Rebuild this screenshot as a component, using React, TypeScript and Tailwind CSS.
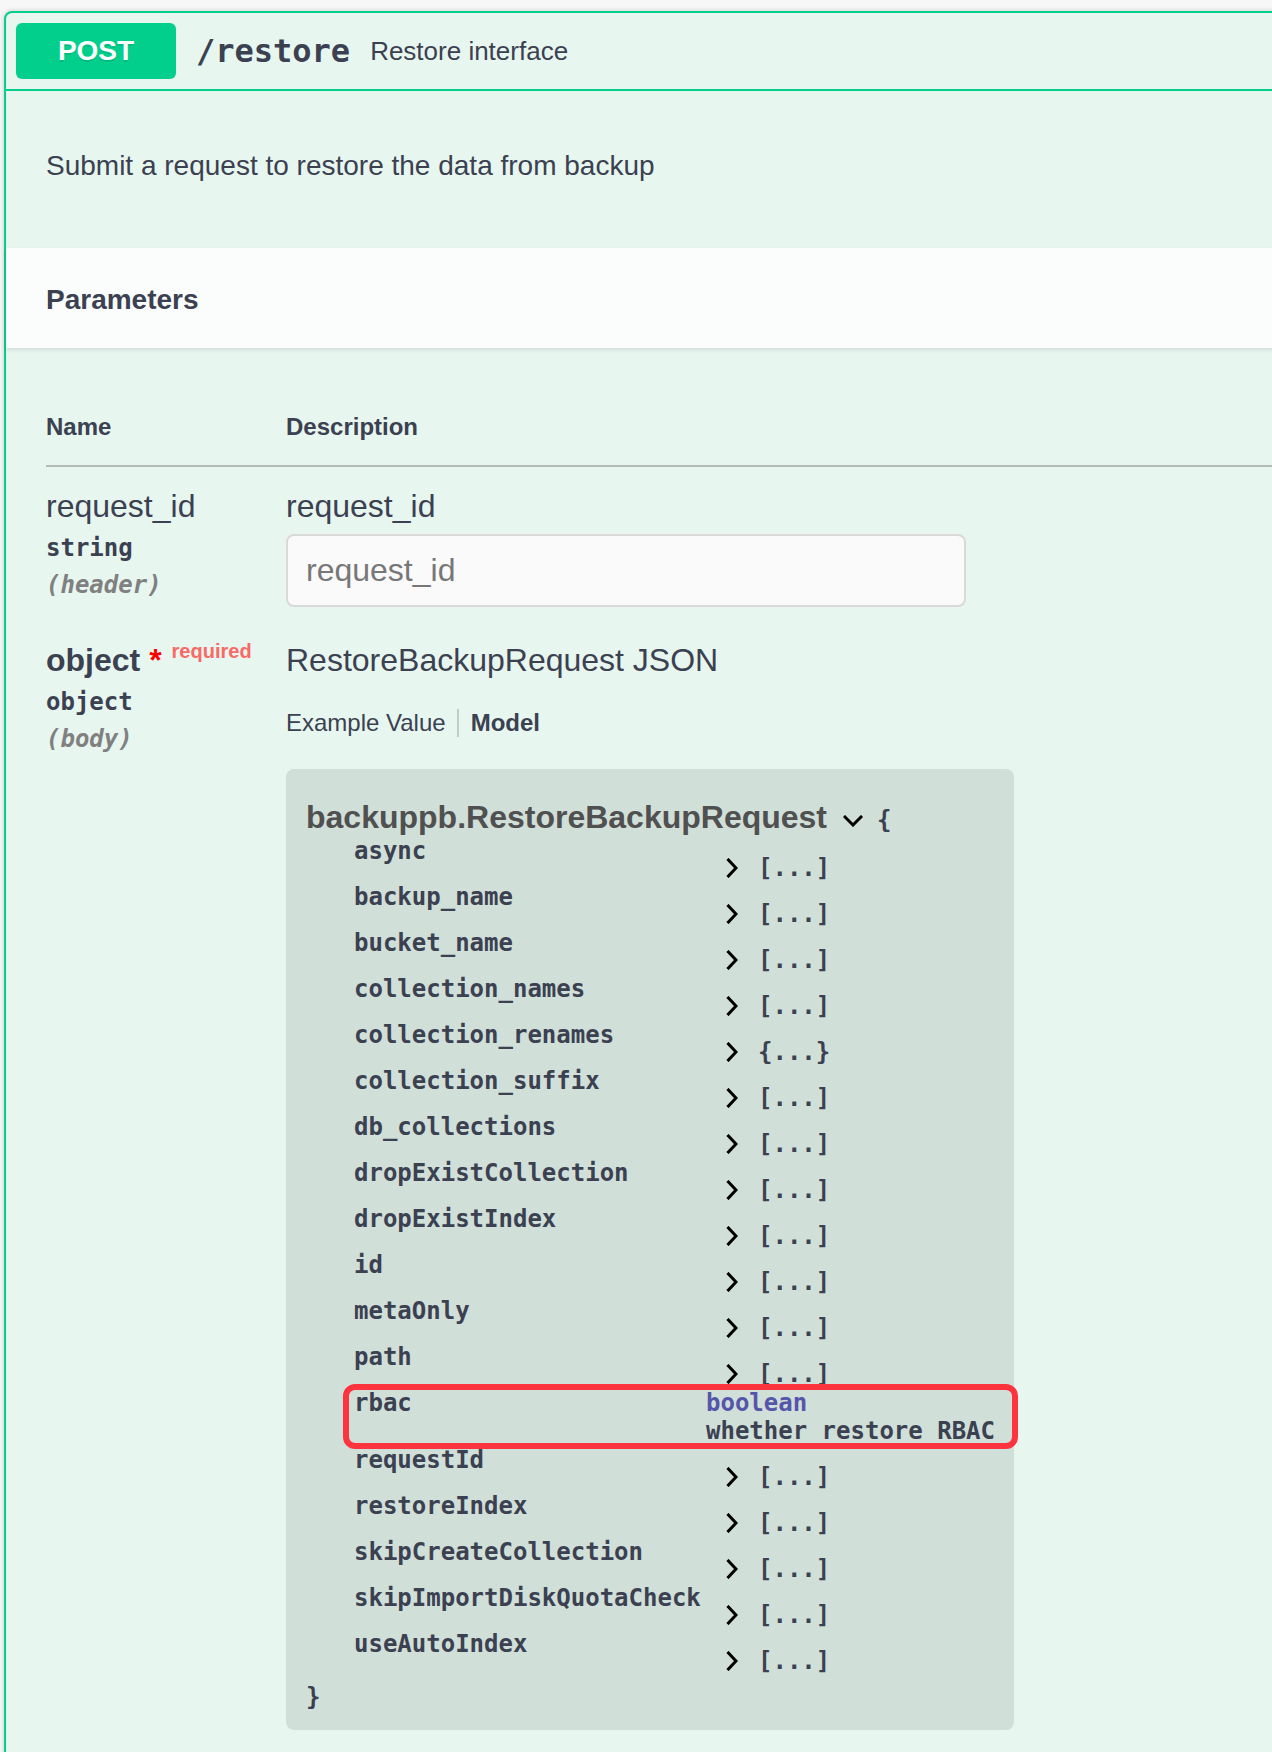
import React from "react";

const props: [string, string | null][] = [
  ["async", "[...]"],
  ["backup_name", "[...]"],
  ["bucket_name", "[...]"],
  ["collection_names", "[...]"],
  ["collection_renames", "{...}"],
  ["collection_suffix", "[...]"],
  ["db_collections", "[...]"],
  ["dropExistCollection", "[...]"],
  ["dropExistIndex", "[...]"],
  ["id", "[...]"],
  ["metaOnly", "[...]"],
  ["path", "[...]"],
  ["rbac", null],
  ["requestId", "[...]"],
  ["restoreIndex", "[...]"],
  ["skipCreateCollection", "[...]"],
  ["skipImportDiskQuotaCheck", "[...]"],
  ["useAutoIndex", "[...]"],
];

function ChevronRight() {
  return (
    <svg width="12" height="20" viewBox="0 0 12 20" className="ml-[20px] shrink-0">
      <path d="M2.5 2 L10 10 L2.5 18" fill="none" stroke="#000" strokeWidth="3" strokeLinecap="square" />
    </svg>
  );
}

function ChevronDown() {
  return (
    <svg width="20" height="12" viewBox="0 0 20 12" className="ml-[16px] relative top-[4px] shrink-0">
      <path d="M2 2 L10 10 L18 2" fill="none" stroke="#000" strokeWidth="3" strokeLinecap="square" />
    </svg>
  );
}

export default function App() {
  return (
    <div className="w-[1272px] h-[1752px] overflow-hidden bg-[#f7f7f7] font-['Liberation_Sans','Arial',sans-serif] text-[#3b4151]">
      <div className="ml-[4px] mt-[11px] w-[1330px] min-h-[1900px] rounded-[8px] border-2 border-[#03cf8d] bg-[#e8f6f0] shadow-[0_0_5px_rgba(0,0,0,0.19)]">
        {/* summary */}
        <div className="flex items-center p-[10px] border-b-2 border-[#03cf8d]">
          <div className="w-[160px] h-[56px] rounded-[6px] bg-[#03cf8d] text-white text-[28px] font-bold flex items-center justify-center [text-shadow:0_2px_0_rgba(0,0,0,0.1)]">
            POST
          </div>
          <span className="px-[20px] font-['DejaVu_Sans_Mono',monospace] text-[32px] font-bold leading-[40px]">/restore</span>
          <span className="text-[26px] leading-[32px]">Restore interface</span>
        </div>

        {/* description */}
        <div className="h-[157px] pl-[40px] pt-[59px]">
          <p className="text-[28px] leading-[32px]">Submit a request to restore the data from backup</p>
        </div>

        {/* parameters header */}
        <div className="h-[100px] bg-[#fafdfc] shadow-[0_2px_4px_rgba(0,0,0,0.1)] flex items-center pl-[40px] pt-[4px]">
          <h4 className="text-[28px] font-bold">Parameters</h4>
        </div>

        {/* table */}
        <div className="pl-[40px]">
          <div className="h-[119px] flex items-end pb-[24px] border-b-2 border-[#b5bdba] text-[24px] font-bold leading-[28px]">
            <div className="w-[240px]">Name</div>
            <div>Description</div>
          </div>

          {/* row 1 */}
          <div className="flex pt-[19px] pb-[14px]">
            <div className="w-[240px]">
              <div className="text-[32px] leading-[40px]">request_id</div>
              <div className="mt-[8px] font-['DejaVu_Sans_Mono',monospace] text-[24px] font-bold leading-[28px]">string</div>
              <div className="mt-[9px] font-['DejaVu_Sans_Mono',monospace] text-[24px] font-bold italic leading-[28px] text-[#808080]">(header)</div>
            </div>
            <div>
              <div className="text-[32px] leading-[40px]">request_id</div>
              <input
                readOnly
                placeholder="request_id"
                className="mt-[8px] block w-[680px] h-[73px] border-2 border-[#d9d9d9] rounded-[8px] bg-[#fafafa] px-[18px] text-[32px] outline-none placeholder:text-[#777777]"
              />
            </div>
          </div>

          {/* row 2 */}
          <div className="flex pt-[19px]">
            <div className="w-[240px]">
              <div className="text-[32px] leading-[40px] font-bold whitespace-nowrap">
                object<span className="text-[#ff0000]">&nbsp;*</span>
                <span className="relative -top-[13px] pl-[10px] text-[20px] font-bold text-[#f86a66]">required</span>
              </div>
              <div className="mt-[4px] font-['DejaVu_Sans_Mono',monospace] text-[24px] font-bold leading-[28px]">object</div>
              <div className="mt-[9px] font-['DejaVu_Sans_Mono',monospace] text-[24px] font-bold italic leading-[28px] text-[#808080]">(body)</div>
            </div>
            <div>
              <div className="text-[32px] leading-[40px]">RestoreBackupRequest JSON</div>
              <div className="mt-[29px] flex text-[24px] leading-[28px]">
                <div className="pr-[11px] border-r-2 border-[#c3cbc8]">Example Value</div>
                <div className="pl-[12px] font-bold">Model</div>
              </div>

              {/* model box */}
              <div className="mt-[32px] w-[728px] rounded-[8px] bg-[#d1dfd9] pl-[20px] pt-[28px] pb-[19px] font-['DejaVu_Sans_Mono',monospace] text-[24px] font-bold">
                <div className="flex items-center h-[40px]">
                  <span className="font-['Liberation_Sans','Arial',sans-serif] text-[32px] font-bold text-[#505050] leading-[40px]">
                    backuppb.RestoreBackupRequest
                  </span>
                  <ChevronDown />
                  <span className="ml-[14px] relative top-[3px] leading-[28px]">{"{"}</span>
                </div>

                {props.map(([name, val]) =>
                  val === null ? (
                    <div key={name} className="relative flex h-[57px]">
                      <div className="w-[400px] pl-[48px] leading-[28px]">{name}</div>
                      <div className="leading-[28px] whitespace-pre">
                        <div className="text-[#5555aa]">boolean</div>
                        <div>whether restore RBAC</div>
                      </div>
                      <div className="absolute left-[37px] -top-[5px] w-[675px] h-[65px] border-[6px] border-[#fd333d] rounded-[12px]" />
                    </div>
                  ) : (
                    <div key={name} className="flex h-[46px]">
                      <div className="w-[400px] pl-[48px] leading-[28px]">{name}</div>
                      <div className="flex items-center h-[28px] mt-[17px]">
                        <ChevronRight />
                        <span className="ml-[20px] leading-[28px]">{val}</span>
                      </div>
                    </div>
                  )
                )}

                <div className="mt-[7px] leading-[28px]">{"}"}</div>
              </div>
            </div>
          </div>
        </div>
      </div>
    </div>
  );
}
